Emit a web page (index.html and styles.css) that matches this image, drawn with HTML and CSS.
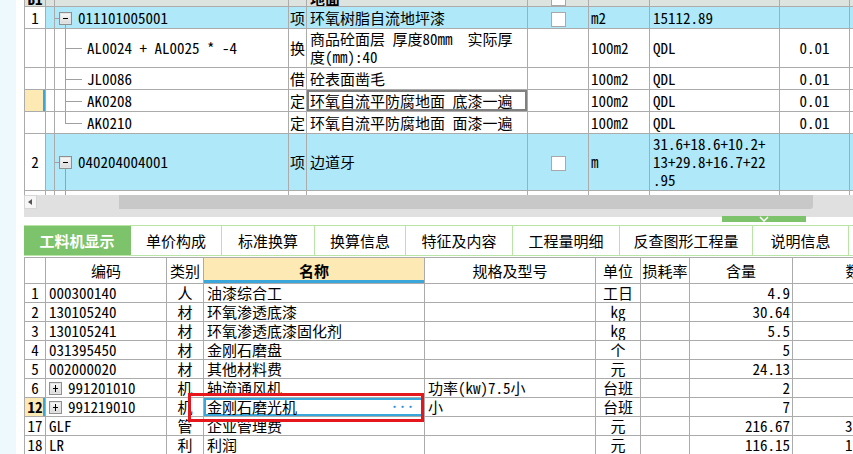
FILE: index.html
```html
<!DOCTYPE html>
<html lang="zh-CN">
<head>
    <meta charset="UTF-8">
    <title>分部分项</title>
    <link rel="stylesheet" href="styles.css">
</head>
<body>

<div class="app">
    <div class="side"></div>
    <div class="main">

        <!-- 清单 / 定额 -->
        <div class="upper">
            <table class="grid top">
                <colgroup>
                    <col style="width:21px"><col style="width:9px"><col style="width:234px"><col style="width:18px">
                    <col style="width:221px"><col style="width:61px"><col style="width:61px"><col style="width:130px">
                    <col style="width:70px"><col style="width:60px">
                </colgroup>
                <tr class="head h24">
                    <td class="num b">B1</td><td></td><td class="tree"></td><td></td>
                    <td class="b">地面</td><td class="c"><span class="cb"></span></td><td></td><td></td><td></td><td></td>
                </tr>
                <tr class="blue h22">
                    <td class="num">1</td><td></td><td class="tree parent"><span class="box"></span>011101005001</td><td class="t">项</td>
                    <td>环氧树脂自流地坪漆</td><td class="c"><span class="cb"></span></td><td class="u">m2</td><td>15112.89</td><td></td><td></td>
                </tr>
                <tr class="h39">
                    <td class="num"></td><td></td><td class="tree child">AL0024 + AL0025 * -4</td><td class="t">换</td>
                    <td>商品砼面层 厚度80mm&nbsp; 实际厚<br>度(mm):40</td><td></td><td class="u">100m2</td><td>QDL</td><td class="c">0.01</td><td></td>
                </tr>
                <tr class="h22">
                    <td class="num"></td><td></td><td class="tree child">JL0086</td><td class="t">借</td>
                    <td>砼表面凿毛</td><td></td><td class="u">100m2</td><td>QDL</td><td class="c">0.01</td><td></td>
                </tr>
                <tr class="h22">
                    <td class="num cur"></td><td></td><td class="tree child">AK0208</td><td class="t">定</td>
                    <td class="focus">环氧自流平防腐地面 底漆一遍</td><td></td><td class="u">100m2</td><td>QDL</td><td class="c">0.01</td><td></td>
                </tr>
                <tr class="h22">
                    <td class="num"></td><td></td><td class="tree child last">AK0210</td><td class="t">定</td>
                    <td>环氧自流平防腐地面 面漆一遍</td><td></td><td class="u">100m2</td><td>QDL</td><td class="c">0.01</td><td></td>
                </tr>
                <tr class="blue h57">
                    <td class="num">2</td><td></td><td class="tree parent open"><span class="box"></span>040204004001</td><td class="t">项</td>
                    <td>边道牙</td><td class="c"><span class="cb"></span></td><td class="u">m</td><td>31.6+18.6+10.2+<br>13+29.8+16.7+22<br>.95</td><td></td><td></td>
                </tr>
                <tr class="h22 below">
                    <td class="num"></td><td></td><td class="tree cont"></td><td class="t"></td>
                    <td>人行道块料铺设 花岗岩</td><td></td><td></td><td></td><td></td><td></td>
                </tr>
            </table>
        </div>

        <div class="hscroll">
            <span class="arrow"></span>
            <span class="thumb"></span>
        </div>

        <div class="splitter">
            <span class="handle">
                <svg width="12" height="6" viewBox="0 0 12 6"><polyline points="2,1 6,5 10,1" fill="none" stroke="#fff" stroke-width="1.5"/></svg>
            </span>
        </div>

        <div class="tabs">
            <div class="tab active" style="width:107px">工料机显示</div>
            <div class="tab" style="width:91px">单价构成</div>
            <div class="tab" style="width:93px">标准换算</div>
            <div class="tab" style="width:91px">换算信息</div>
            <div class="tab" style="width:107px">特征及内容</div>
            <div class="tab" style="width:107px">工程量明细</div>
            <div class="tab" style="width:133px">反查图形工程量</div>
            <div class="tab" style="width:96px">说明信息</div>
            <div class="tab rest"></div>
        </div>

        <!-- 工料机 -->
        <table class="grid bottom">
            <colgroup>
                <col style="width:21px"><col style="width:121px"><col style="width:37px"><col style="width:221px">
                <col style="width:171px"><col style="width:45px"><col style="width:49px"><col style="width:103px">
                <col style="width:136px">
            </colgroup>
            <tr class="hdr">
                <td></td><td class="c">编码</td><td class="c">类别</td><td class="c namehd">名称</td>
                <td class="c">规格及型号</td><td class="c">单位</td><td class="c tight">损耗率</td><td class="c">含量</td><td class="c">数量</td>
            </tr>
            <tr><td class="num">1</td><td>000300140</td><td class="c">人</td><td>油漆综合工</td><td></td><td class="c">工日</td><td></td><td class="r">4.9</td><td></td></tr>
            <tr><td class="num">2</td><td>130105240</td><td class="c">材</td><td>环氧渗透底漆</td><td></td><td class="c">kg</td><td></td><td class="r">30.64</td><td></td></tr>
            <tr><td class="num">3</td><td>130105241</td><td class="c">材</td><td>环氧渗透底漆固化剂</td><td></td><td class="c">kg</td><td></td><td class="r">5.5</td><td></td></tr>
            <tr><td class="num">4</td><td>031395450</td><td class="c">材</td><td>金刚石磨盘</td><td></td><td class="c">个</td><td></td><td class="r">5</td><td></td></tr>
            <tr><td class="num">5</td><td>002000020</td><td class="c">材</td><td>其他材料费</td><td></td><td class="c">元</td><td></td><td class="r">24.13</td><td></td></tr>
            <tr><td class="num">6</td><td><span class="plus"></span>991201010</td><td class="c">机</td><td>轴流通风机</td><td>功率(kw)7.5小</td><td class="c">台班</td><td></td><td class="r">2</td><td></td></tr>
            <tr><td class="num cur b">12</td><td><span class="plus"></span>991219010</td><td class="c">机</td><td class="edit">金刚石磨光机<span class="more">···</span></td><td>小</td><td class="c">台班</td><td></td><td class="r">7</td><td></td></tr>
            <tr><td class="num">17</td><td>GLF</td><td class="c">管</td><td>企业管理费</td><td></td><td class="c">元</td><td></td><td class="r">216.67</td><td class="qty">3</td></tr>
            <tr><td class="num">18</td><td>LR</td><td class="c">利</td><td>利润</td><td></td><td class="c">元</td><td></td><td class="r">116.15</td><td class="qty">1</td></tr>
        </table>

    </div>
</div>

<div class="mark"></div>

</body>
</html>
```

FILE: styles.css
```css
* {
    box-sizing: border-box;
}
body {
    margin: 0;
    font-family: "Noto Sans Mono CJK SC", "Noto Sans CJK SC", monospace;
    font-size: 15px;
    color: #000;
    background-color: #eef9fd;
    overflow: hidden;
}
.app {
    display: flex;
    height: 454px;
}
.side {
    width: 16px;
    flex: none;
}
.main {
    flex: 1;
    min-width: 0;
    background-color: #fff;
    padding-left: 8px;
    overflow: hidden;
}

/* grids */
.grid {
    border-collapse: collapse;
    table-layout: fixed;
}
.grid td {
    border: 1px solid #ababab;
    padding: 0 3px;
    white-space: nowrap;
    overflow: hidden;
    line-height: 18px;
    vertical-align: middle;
}
.grid .c {
    text-align: center;
}
.grid .r {
    text-align: right;
    padding-right: 2px;
}
.b {
    font-weight: bold;
}
.grid td.num {
    text-align: center;
    padding: 0;
    background-color: #fff;
}
.grid td.cur {
    background-color: #fde9b4;
    box-shadow: inset -2px 0 0 #3aa6d9;
}

/* upper grid */
.upper {
    height: 195px;
    overflow: hidden;
}
.top {
    width: 885px;
    margin-top: -18px;
}
.top .h24 td { height: 24px; }
.top .h22 td { height: 22px; }
.top .h39 td { height: 39px; }
.top .h57 td { height: 57px; }
.top .head td {
    background-color: #dde4e0;
    vertical-align: bottom;
    line-height: 14px;
}
.top .head td.num {
    background-color: #dde4e0;
}
.top .blue td {
    background-color: #aee8f9;
}
.top .blue td.num {
    background-color: #fff;
}
.top td.t {
    padding: 0;
    text-align: center;
}
.top td.u {
    padding-left: 2px;
}
.top .below td {
    vertical-align: top;
    padding-top: 6px;
}
.top td.focus {
    box-shadow: inset 0 0 0 2px #808080;
}
.cb {
    display: inline-block;
    width: 15px;
    height: 15px;
    border: 1px solid #a8a8a8;
    background-color: #fff;
    vertical-align: middle;
}

/* tree lines */
.top td.tree {
    position: relative;
    padding-left: 32px;
}
.top td.tree.parent {
    padding-left: 23px;
}
.box {
    position: absolute;
    left: 4px;
    top: 50%;
    margin-top: -6px;
    width: 13px;
    height: 13px;
    border: 1px solid #8f8f8f;
    box-shadow: inset 0 0 0 1px #e4e4e4;
    background: linear-gradient(#fafafa, #d8d8d8);
}
.box::after {
    content: "";
    position: absolute;
    left: 3px;
    right: 3px;
    top: 5px;
    height: 1px;
    background-color: #000;
}
.tree.parent::before {
    content: "";
    position: absolute;
    left: 0;
    width: 4px;
    top: 50%;
    height: 1px;
    background-color: #a0a0a0;
}
.tree.parent::after {
    content: "";
    position: absolute;
    left: 10px;
    width: 1px;
    top: calc(50% + 7px);
    bottom: 0;
    background-color: #a0a0a0;
}
.tree.child::before,
.tree.cont::before {
    content: "";
    position: absolute;
    left: 10px;
    width: 1px;
    top: 0;
    bottom: 0;
    background-color: #a0a0a0;
}
.tree.child.last::before {
    bottom: 50%;
}
.tree.child::after {
    content: "";
    position: absolute;
    left: 10px;
    width: 17px;
    top: 50%;
    height: 1px;
    background-color: #a0a0a0;
}

/* scrollbar + splitter */
.hscroll {
    height: 22px;
    background-color: #e0e0e0;
    display: flex;
    align-items: flex-start;
}
.arrow {
    width: 13px;
    height: 14px;
    background-color: #f6f6f6;
    border: 1px solid #d6d6d6;
    position: relative;
}
.arrow::after {
    content: "";
    position: absolute;
    left: 3px;
    top: 3px;
    border-top: 3.5px solid transparent;
    border-bottom: 3.5px solid transparent;
    border-right: 4px solid #555;
}
.thumb {
    margin-left: 82px;
    width: 694px;
    height: 14px;
    background-color: #c8c8c8;
    border-radius: 0 0 3px 0;
}
.splitter {
    height: 8px;
    display: flex;
    justify-content: flex-end;
    padding-right: 47px;
}
.handle {
    width: 84px;
    height: 6px;
    margin-top: -1px;
    background-color: #7dc36b;
    display: flex;
    justify-content: center;
}
.handle svg {
    display: block;
}

/* tabs */
.tabs {
    display: flex;
    height: 31px;
    border-top: 1px solid #b8e5a6;
    border-bottom: 1px solid #b8e5a6;
}
.tab {
    flex: none;
    border-right: 1px solid #b8e5a6;
    text-align: center;
    line-height: 29px;
    white-space: nowrap;
}
.tab.active {
    background-color: #7dc36b;
    color: #fff;
    font-weight: bold;
    border-right-color: #7dc36b;
}
.tab.rest {
    flex: 1;
    border-right: none;
}

/* lower grid */
.bottom {
    width: 904px;
    margin-top: 1px;
}
.bottom td {
    height: 19px;
}
.bottom .hdr td {
    height: 26px;
}
.bottom td.tight {
    padding: 0;
}
.bottom td.qty {
    padding-left: 52px;
}
.bottom td.namehd {
    background-color: #fde9b4;
    font-weight: bold;
    box-shadow: inset 0 -3px 0 #3aa6d9;
}
.bottom td.edit {
    box-shadow: inset 0 0 0 2px #3aa6d9;
}
.more {
    float: right;
    color: #2f8fd8;
    font-size: 9px;
    font-weight: bold;
    letter-spacing: -1px;
    margin-right: 7px;
}
.plus {
    display: inline-block;
    position: relative;
    width: 13px;
    height: 13px;
    margin-right: 6px;
    vertical-align: -1px;
    border: 1px solid #8f8f8f;
    box-shadow: inset 0 0 0 1px #e4e4e4;
    background: linear-gradient(#fafafa, #d8d8d8);
}
.plus::before {
    content: "";
    position: absolute;
    left: 3px;
    right: 3px;
    top: 5px;
    height: 1px;
    background-color: #000;
}
.plus::after {
    content: "";
    position: absolute;
    top: 2px;
    bottom: 2px;
    left: 5px;
    width: 1px;
    background-color: #000;
}

/* red annotation frame */
.mark {
    position: absolute;
    left: 188px;
    top: 393px;
    width: 236px;
    height: 29px;
    border: 3px solid #e5171c;
}
```
